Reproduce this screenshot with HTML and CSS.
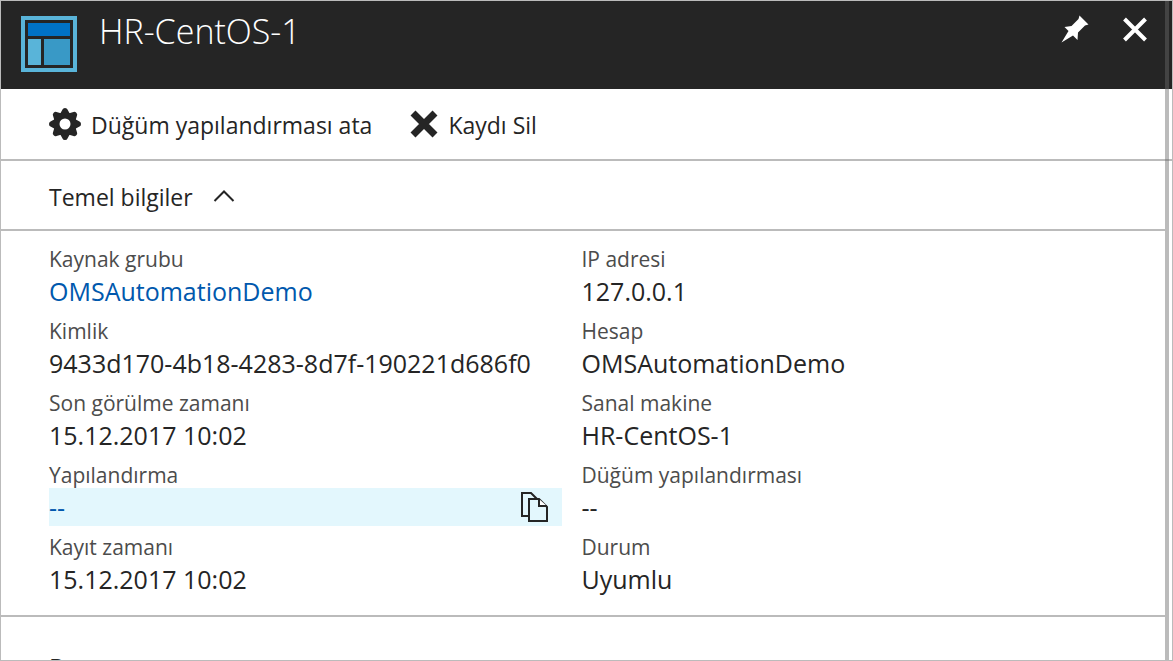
FILE: index.html
```html
<!DOCTYPE html>
<html lang="tr">
<head>
<meta charset="utf-8">
<meta name="viewport" content="width=device-width, initial-scale=1">
<title>HR-CentOS-1</title>
<link rel="stylesheet" href="styles.css">
</head>
<body>
<main class="blade">
  <header class="blade-header">
    <svg class="blade-icon" viewBox="0 0 56 56" aria-hidden="true">
      <rect x="2" y="2" width="52" height="52" fill="none" stroke="#59b4d9" stroke-width="4"/>
      <rect x="7" y="7" width="42" height="13" fill="#0072c6"/>
      <rect x="7" y="23" width="13" height="26" fill="#59b4d9"/>
      <rect x="23" y="23" width="26" height="26" fill="#3999c6"/>
    </svg>
    <h1 class="blade-title">HR-CentOS-1</h1>
    <div class="blade-actions">
      <button class="icon-button" type="button" aria-label="Sabitle">
        <svg width="28" height="28" viewBox="0 0 28 28" aria-hidden="true">
          <path fill="#fff" d="M18.500 0.500L27.500 9.500L24 10.500L17 17.500L16.500 25L12 20.500L0.500 27.500L7.500 16L3.500 12L10.500 11L17.500 4Z"/>
        </svg>
      </button>
      <button class="icon-button" type="button" aria-label="Kapat">
        <svg width="28" height="28" viewBox="0 0 28 28" aria-hidden="true">
          <path fill="none" stroke="#fff" stroke-width="4" d="M3.500 4L24.500 25M24.500 4L3.500 25"/>
        </svg>
      </button>
    </div>
  </header>

  <nav class="toolbar" aria-label="Komutlar">
    <button class="command" type="button">
      <svg width="32" height="32" viewBox="0 0 32 32" aria-hidden="true">
        <g fill="#252525">
          <path id="teeth" d="M10.500 7L13.500 1.500Q14 0 16 0Q18 0 18.500 1.500L21.500 7V25L18.500 30.500Q18 32 16 32Q14 32 13.500 30.500L10.500 25Z"/>
          <use href="#teeth" transform="rotate(45 16 16)"/>
          <use href="#teeth" transform="rotate(90 16 16)"/>
          <use href="#teeth" transform="rotate(135 16 16)"/>
          <circle cx="16" cy="16" r="11.500"/>
        </g>
        <circle cx="16" cy="16" r="5.500" fill="#fff"/>
      </svg>
      <span>Düğüm yapılandırması ata</span>
    </button>
    <button class="command" type="button">
      <svg width="28" height="28" viewBox="0 0 28 28" aria-hidden="true">
        <path fill="none" stroke="#252525" stroke-width="7" d="M3 3L25 25M25 3L3 25"/>
      </svg>
      <span>Kaydı Sil</span>
    </button>
  </nav>

  <section class="essentials">
    <h2 class="essentials-heading">
      <button class="essentials-toggle" type="button" aria-expanded="true">
        <span>Temel bilgiler</span>
        <svg width="22" height="14" viewBox="0 0 22 14" aria-hidden="true">
          <path fill="none" stroke="#252525" stroke-width="2" d="M1.500 11L11 1.500L20.500 11"/>
        </svg>
      </button>
    </h2>
    <div class="properties">
      <dl class="property-list">
        <div class="property"><dt>Kaynak grubu</dt><dd><a href="#">OMSAutomationDemo</a></dd></div>
        <div class="property"><dt>Kimlik</dt><dd>9433d170-4b18-4283-8d7f-190221d686f0</dd></div>
        <div class="property"><dt>Son görülme zamanı</dt><dd>15.12.2017 10:02</dd></div>
        <div class="property"><dt>Yapılandırma</dt>
          <dd class="is-active"><a href="#">--</a>
            <button class="copy-button" type="button" aria-label="Kopyala">
              <svg width="28" height="32" viewBox="0 0 28 32" aria-hidden="true">
                <g stroke="#252525" stroke-width="2">
                  <path fill="#e3f7fd" d="M2 2H11L17 8V25H2Z"/>
                  <path fill="#e3f7fd" d="M9 8H19L27 16V30H9Z"/>
                  <path fill="#fff" d="M19 8V15H27"/>
                </g>
              </svg>
            </button>
          </dd>
        </div>
        <div class="property"><dt>Kayıt zamanı</dt><dd>15.12.2017 10:02</dd></div>
      </dl>
      <dl class="property-list">
        <div class="property"><dt>IP adresi</dt><dd>127.0.0.1</dd></div>
        <div class="property"><dt>Hesap</dt><dd>OMSAutomationDemo</dd></div>
        <div class="property"><dt>Sanal makine</dt><dd>HR-CentOS-1</dd></div>
        <div class="property"><dt>Düğüm yapılandırması</dt><dd>--</dd></div>
        <div class="property"><dt>Durum</dt><dd>Uyumlu</dd></div>
      </dl>
    </div>
  </section>

  <h2 class="next-heading">D</h2>
  <div class="scroll-track"></div>
</main>
</body>
</html>
```

FILE: styles.css
```css
* {
  box-sizing: border-box;
}

body {
  margin: 0;
  font-family: "Open Sans", "Noto Sans", sans-serif;
  color: #252525;
  background: #fff;
}

button {
  display: flex;
  align-items: center;
  padding: 0;
  border: 0;
  background: none;
  color: inherit;
  font: inherit;
  cursor: pointer;
}

svg {
  display: block;
  flex: none;
}

h1, h2, dl, dd {
  margin: 0;
  font-weight: 400;
}

.blade {
  position: relative;
  display: flex;
  flex-direction: column;
  height: 100vh;
  overflow: hidden;
  border: 1px solid #bbb;
}

.blade > * {
  flex: none;
}

.blade-header {
  display: flex;
  align-items: flex-start;
  gap: 22px;
  padding: 14px 23px 17px 20px;
  background: #252525;
  color: #fff;
}

.blade-icon {
  width: 56px;
  height: 56px;
  margin-top: 1px;
}

.blade-title {
  flex: 1;
  font-size: 34px;
  font-weight: 300;
  line-height: 32px;
}

.blade-actions {
  display: flex;
  gap: 32px;
}

.toolbar {
  display: flex;
  align-items: center;
  gap: 38px;
  padding: 0 48px;
  height: 72px;
  border-bottom: 2px solid #bbb;
}

.command {
  gap: 10px;
  font-size: 23px;
  line-height: 32px;
}

.command span {
  padding-top: 2px;
}

.essentials {
  margin-right: 7px;
  border-bottom: 2px solid #bbb;
}

.essentials-heading {
  padding: 20px 48px 16px;
  border-bottom: 2px solid #bbb;
}

.essentials-toggle {
  gap: 20px;
  font-size: 23px;
  line-height: 32px;
}

.properties {
  display: grid;
  grid-template-columns: 1fr 1fr;
  gap: 20px;
  padding: 15px 71px 17px 48px;
}

.property-list {
  display: grid;
  gap: 8px;
}

.property dt {
  font-size: 21px;
  line-height: 26px;
  color: #4c4c4c;
}

.property dd {
  display: flex;
  align-items: center;
  justify-content: space-between;
  height: 38px;
  font-size: 25px;
}

.property a {
  color: #0058ad;
  text-decoration: none;
}

.property .is-active {
  padding-right: 14px;
  background: #e3f7fd;
}

.next-heading {
  padding: 34px 48px;
  font-size: 24px;
  line-height: 32px;
}

.scroll-track {
  position: absolute;
  top: 0;
  right: 3px;
  bottom: 0;
  width: 4px;
  background: rgba(105, 105, 105, 0.45);
}
```
